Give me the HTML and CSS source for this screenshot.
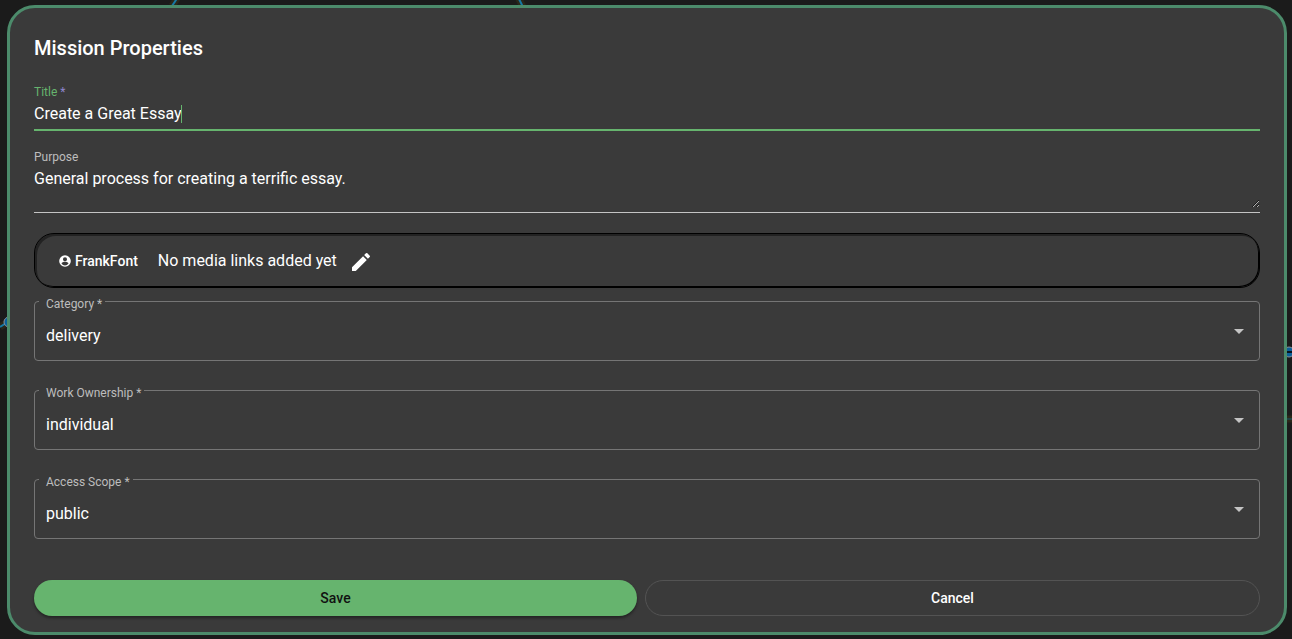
FILE: index.html
```html
<!DOCTYPE html>
<html lang="en">
<head>
<meta charset="utf-8">
<title>Mission Properties</title>
<link rel="stylesheet" href="styles.css">
</head>
<body>
<svg class="edge edge-top-left" width="24" height="8" viewBox="0 0 24 8" aria-hidden="true"><path class="halo" d="M10 6 16-3"/><path class="link" d="M10 6 16-3"/></svg>
<svg class="edge edge-top-mid" width="24" height="8" viewBox="0 0 24 8" aria-hidden="true"><path class="halo" d="M13 7 8-3"/><path class="link" d="M13 7 8-3"/></svg>
<svg class="edge edge-left" width="12" height="24" viewBox="0 0 12 24" aria-hidden="true"><path class="halo" d="M0 17 8 12"/><path class="link" d="M0 17 8 12"/><circle class="node" cx="9" cy="12" r="5"/></svg>
<svg class="edge edge-right" width="12" height="84" viewBox="0 0 12 84" aria-hidden="true"><circle class="node" cx="9" cy="12" r="5"/><path class="dash" d="M7 12h5"/><path class="halo" d="M0 79h12"/><path class="link" d="M0 79h12"/></svg>
<form class="dialog">
  <h1 class="heading">Mission Properties</h1>
  <div class="field field-active">
    <label class="label" for="title">Title <span class="required">*</span></label>
    <input class="text" id="title" type="text" value="Create a Great Essay">
    <span class="caret"></span>
  </div>
  <div class="field field-area">
    <label class="label" for="purpose">Purpose</label>
    <textarea class="text area" id="purpose">General process for creating a terrific essay.</textarea>
  </div>
  <div class="media">
    <span class="user">
      <svg width="14" height="14" viewBox="0 0 24 24" aria-hidden="true"><path d="M12 2a10 10 0 1 0 0 20 10 10 0 0 0 0-20zm0 3.500a3.500 3.500 0 1 1 0 7 3.500 3.500 0 0 1 0-7zm0 14a7.500 7.500 0 0 1-6-3.200c0-1.900 4-2.900 6-2.900s6 1 6 2.900a7.500 7.500 0 0 1-6 3.200z"/></svg>
      FrankFont
    </span>
    <span class="message">No media links added yet</span>
    <button class="edit" type="button" aria-label="Edit media links"><svg width="24" height="24" viewBox="0 0 24 24" aria-hidden="true"><path d="M3 17.250V21h3.750L17.810 9.940l-3.750-3.750L3 17.250zM20.710 7.040a1 1 0 0 0 0-1.410l-2.340-2.340a1 1 0 0 0-1.410 0l-1.830 1.830 3.750 3.750 1.830-1.830z"/></svg></button>
  </div>
  <div class="choices">
    <fieldset class="choice">
      <legend class="notch"><label for="category">Category *</label></legend>
      <select class="select" id="category"><option>delivery</option></select>
      <span class="arrow"></span>
    </fieldset>
    <fieldset class="choice">
      <legend class="notch"><label for="ownership">Work Ownership *</label></legend>
      <select class="select" id="ownership"><option>individual</option></select>
      <span class="arrow"></span>
    </fieldset>
    <fieldset class="choice">
      <legend class="notch"><label for="scope">Access Scope *</label></legend>
      <select class="select" id="scope"><option>public</option></select>
      <span class="arrow"></span>
    </fieldset>
  </div>
  <div class="actions">
    <button class="button save" type="submit">Save</button>
    <button class="button cancel" type="button">Cancel</button>
  </div>
</form>
</body>
</html>
```
FILE: styles.css
```css
* { box-sizing: border-box; }
body {
  margin: 0;
  min-height: 100vh;
  padding: 5px 5px 4px 7px;
  display: flex;
  background: #1b1b1b;
  color: #fff;
  font: 400 16px/24px Roboto, sans-serif;
}
.edge { position: absolute; fill: none; }
.edge-top-left { left: 162px; top: 0; }
.edge-top-mid { left: 510px; top: 0; }
.edge-left { left: 0; top: 310px; }
.edge-right { right: 0; top: 340px; }
.halo { stroke: #2b2819; stroke-width: 7; }
.link { stroke: #1679a5; stroke-width: 2; }
.edge-right .link { stroke: #14586a; stroke-width: 1; }
.node { fill: #0b5f99; stroke: #8a9299; stroke-width: 1; }
.dash { stroke: #05131e; stroke-width: 2; }
.dialog {
  position: relative;
  flex: 1;
  display: flex;
  flex-direction: column;
  padding: 24px;
  padding-bottom: 16px;
  border: 3px solid #4c8b6b;
  border-radius: 28px;
  background: #3a3a3a;
}
.heading { margin: 0; font-size: 20px; line-height: 32px; font-weight: 500; }
.field {
  position: relative;
  display: flex;
  flex-direction: column;
  margin-top: 20px;
  border-bottom: 1px solid #c4c4c4;
}
.field-active { border-bottom: 2px solid #66b46e; }
.label { font-size: 12px; line-height: 16px; color: #bdbdbd; }
.field-active .label { color: #66b46e; }
.required { color: #8f86cc; }
.text {
  width: 100%;
  height: 29px;
  margin: 0;
  padding: 0;
  border: 0;
  outline: 0;
  background: transparent;
  color: inherit;
  font: inherit;
}
.field-active .text { padding-bottom: 3px; }
.caret {
  position: absolute;
  left: 147px;
  bottom: 6px;
  width: 1px;
  height: 18px;
  background: #66b46e;
}
.field-area { margin-top: 18px; padding-bottom: 4px; }
.area { display: block; height: 43px; padding-top: 2px; resize: vertical; }
.media {
  display: flex;
  align-items: center;
  height: 55px;
  margin-top: 20px;
  padding: 0 23px;
  border: 1px solid #000;
  border-radius: 20px;
  box-shadow: inset -1px -1px #000, inset 2px 2px #222;
}
.media svg { display: block; fill: #fff; }
.user {
  display: flex;
  align-items: center;
  gap: 3px;
  margin-right: 20px;
  font-size: 14px;
  font-weight: 500;
}
.edit { margin: 2px 0 0 12px; padding: 0; border: 0; background: none; }
.choices { display: flex; flex-direction: column; gap: 19px; margin-top: 3px; }
.choice {
  position: relative;
  min-width: 0;
  margin: 0;
  padding: 0;
  border: 1px solid #757575;
  border-radius: 4px;
}
.notch {
  margin-left: 4px;
  padding: 6px 3px 0 7px;
  font-size: 12px;
  line-height: 14px;
  color: #bdbdbd;
}
.notch label { display: block; }
.select {
  display: block;
  width: 100%;
  height: 49px;
  padding: 1px 11px 0;
  border: 0;
  outline: 0;
  appearance: none;
  background: transparent;
  color: inherit;
  font: inherit;
}
.arrow {
  position: absolute;
  right: 15px;
  bottom: 26px;
  border: 5px solid transparent;
  border-top-color: #c4c4c4;
  border-bottom: 0;
  pointer-events: none;
}
.actions { display: flex; gap: 8px; margin-top: 41px; }
.button {
  height: 36px;
  border-radius: 18px;
  font: 500 14px/20px Roboto, sans-serif;
}
.save {
  flex: 1 1 603px;
  border: 0;
  background: #66b46e;
  color: #111;
  box-shadow: 0 2px 3px rgba(0, 0, 0, .4);
}
.cancel {
  flex: 1 1 615px;
  border: 1px solid #535353;
  background: transparent;
  color: #fff;
}
```
